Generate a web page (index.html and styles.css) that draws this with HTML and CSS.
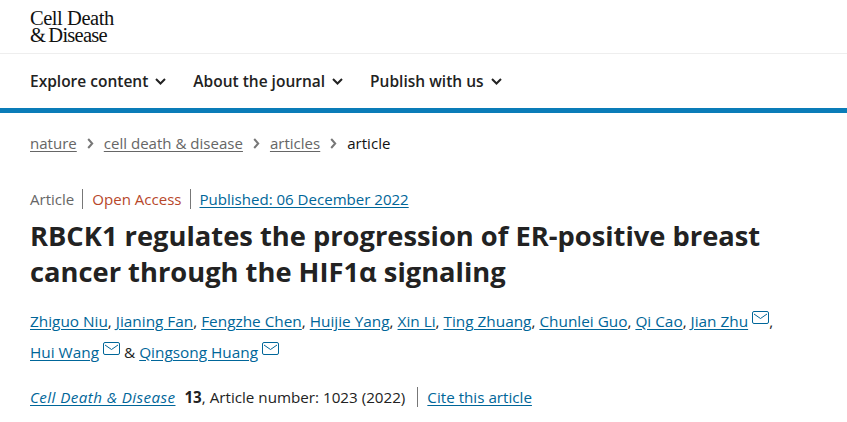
FILE: index.html
```html
<!DOCTYPE html>
<html lang="en">
<head>
  <meta charset="UTF-8" />
  <title>RBCK1 regulates the progression of ER-positive breast cancer</title>
  <link rel="stylesheet" href="styles.css">
</head>
<body>
  <header class="brand">
    <div class="logo">Cell Death</div>
    <div class="logo logo-second">&amp; Disease</div>
  </header>

  <nav class="main-nav">
    <a class="nav-item">Explore content <svg class="chevron" width="11" height="7" viewBox="0 0 11 7"><path d="M1 1l4.5 4.5L10 1" /></svg></a>
    <a class="nav-item">About the journal <svg class="chevron" width="11" height="7" viewBox="0 0 11 7"><path d="M1 1l4.5 4.5L10 1" /></svg></a>
    <a class="nav-item">Publish with us <svg class="chevron" width="11" height="7" viewBox="0 0 11 7"><path d="M1 1l4.5 4.5L10 1" /></svg></a>
  </nav>

  <main class="article">
    <ol class="crumbs">
      <li><a href="#">nature</a></li>
      <li class="sep"><svg width="7" height="11" viewBox="0 0 7 11"><path d="M1.2 1l4 4.5-4 4.5" /></svg></li>
      <li><a href="#">cell death &amp; disease</a></li>
      <li class="sep"><svg width="7" height="11" viewBox="0 0 7 11"><path d="M1.2 1l4 4.5-4 4.5" /></svg></li>
      <li><a href="#">articles</a></li>
      <li class="sep"><svg width="7" height="11" viewBox="0 0 7 11"><path d="M1.2 1l4 4.5-4 4.5" /></svg></li>
      <li class="current">article</li>
    </ol>

    <ul class="meta">
      <li class="type">Article</li>
      <li class="access">Open Access</li>
      <li><a href="#">Published: 06 December 2022</a></li>
    </ul>

    <h1>RBCK1 regulates the progression of ER-positive breast cancer through the HIF1α signaling</h1>

    <p class="authors">
      <a href="#">Zhiguo Niu</a>, <a href="#">Jianing Fan</a>, <a href="#">Fengzhe Chen</a>, <a href="#">Huijie Yang</a>, <a href="#">Xin Li</a>, <a href="#">Ting Zhuang</a>, <a href="#">Chunlei Guo</a>, <a href="#">Qi Cao</a>, <a href="#">Jian Zhu</a>
      <svg class="mail" width="17" height="13" viewBox="0 0 17 13"><rect x="0.5" y="0.5" width="16" height="12" rx="1.5" /><path d="M2 3l6.5 4.5L15 3" /></svg>,<br>
      <a href="#">Hui Wang</a>
      <svg class="mail" width="17" height="13" viewBox="0 0 17 13"><rect x="0.5" y="0.5" width="16" height="12" rx="1.5" /><path d="M2 3l6.5 4.5L15 3" /></svg>
      &amp; <a href="#">Qingsong Huang</a>
      <svg class="mail" width="17" height="13" viewBox="0 0 17 13"><rect x="0.5" y="0.5" width="16" height="12" rx="1.5" /><path d="M2 3l6.5 4.5L15 3" /></svg>
    </p>

    <p class="cite">
      <span class="cite-ref"><a href="#"><i>Cell Death &amp; Disease</i></a> <b class="vol">13</b>, Article number: 1023 (2022)</span>
      <a class="cite-link" href="#">Cite this article</a>
    </p>
  </main>
</body>
</html>
```

FILE: styles.css
```css
body {
  margin: 0;
  font-family: "Open Sans", "Noto Sans", sans-serif;
  font-size: 15.2px;
  color: #222;
  background: #fff;
}
a {
  color: #006699;
  text-decoration: underline;
  text-underline-offset: 2px;
}
.brand {
  height: 43px;
  padding: 10px 30px 0;
  border-bottom: 1px solid #eee;
}
.logo {
  font-family: "Liberation Serif", serif;
  font-size: 20.5px;
  line-height: 17px;
  letter-spacing: -0.45px;
  color: #111;
}
.logo-second {
  letter-spacing: -0.75px;
  word-spacing: -1.2px;
}
.main-nav {
  display: flex;
  gap: 27px;
  height: 54px;
  padding: 0 30px;
  align-items: center;
  border-bottom: 5px solid #0a7cb8;
}
.nav-item {
  font-size: 15.5px;
  font-weight: 600;
  color: #222;
  text-decoration: none;
  display: flex;
  align-items: center;
  gap: 7px;
}
.chevron path {
  fill: none;
  stroke: #222;
  stroke-width: 2;
}
.article {
  padding: 0 30px;
}
.crumbs {
  list-style: none;
  margin: 0;
  padding: 20px 0 0;
  display: flex;
  align-items: center;
  gap: 10px;
  font-size: 15.05px;
  line-height: 20px;
}
.crumbs a {
  color: #666;
}
.crumbs .current {
  color: #111;
}
.sep {
  display: flex;
}
.sep path {
  fill: none;
  stroke: #777;
  stroke-width: 2;
}
.meta {
  list-style: none;
  margin: 36px 0 0;
  padding: 0;
  display: flex;
  font-size: 15.05px;
  line-height: 20px;
}
.meta li + li {
  border-left: 1px solid #777;
  margin-left: 8px;
  padding-left: 9px;
}
.type {
  color: #666;
}
.access {
  color: #b7472a;
}
h1 {
  margin: 9px 0 0;
  max-width: 770px;
  font-size: 27.3px;
  line-height: 36px;
  font-weight: 700;
  color: #222;
}
.authors {
  margin: 16px 0 0;
  font-size: 15.35px;
  line-height: 31px;
}
.mail {
  vertical-align: 3px;
}
.mail rect, .mail path {
  fill: none;
  stroke: #006699;
}
.cite {
  margin: 19px 0 0;
  display: flex;
  align-items: center;
  line-height: 20px;
}
.cite i {
  letter-spacing: 0.42px;
}
.vol {
  margin-left: 5px;
}
.cite-link {
  border-left: 1px solid #777;
  margin-left: 12px;
  padding-left: 9px;
}
```
